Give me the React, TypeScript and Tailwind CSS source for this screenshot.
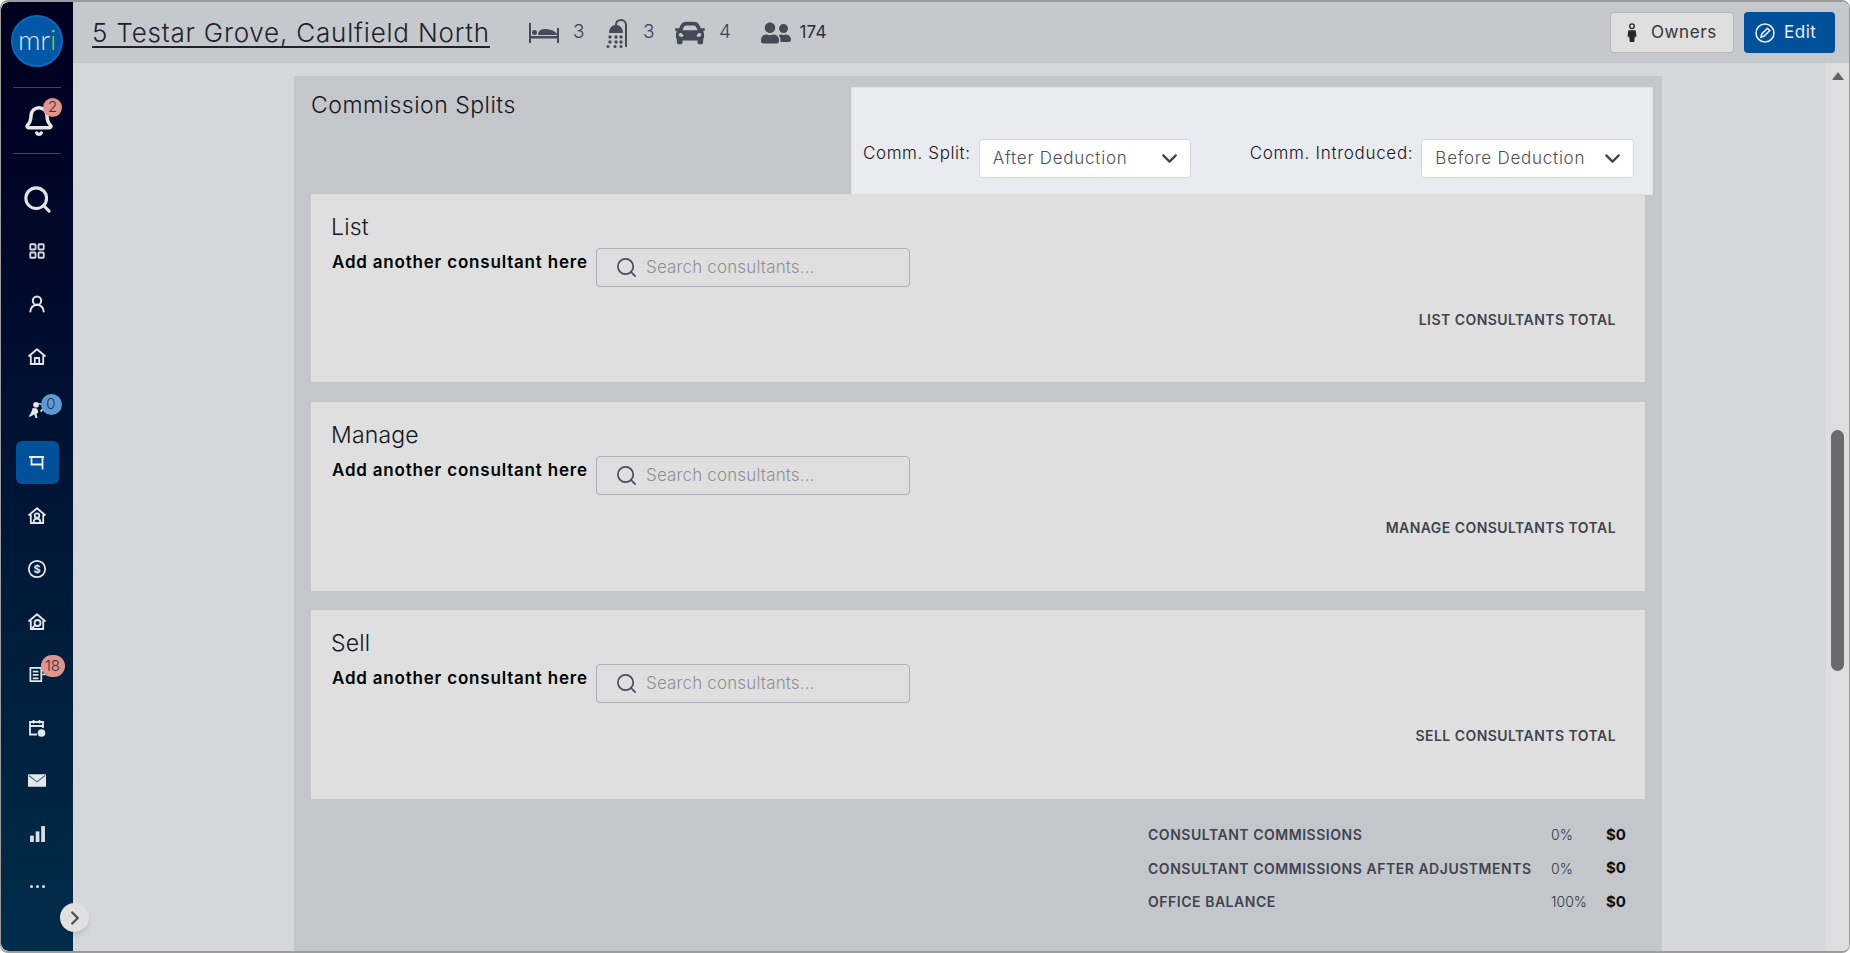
import { Bell, ChevronDown, ChevronRight, LayoutGrid, Search, UserRound } from "lucide-react"
import { FaCar, FaUserFriends } from "react-icons/fa"

const font = "font-['Inter','Liberation_Sans',sans-serif]"

const Badge = ({ text, color, className }: { text: string; color: string; className: string }) => (
    <div className={`absolute flex items-center justify-center rounded-full text-[15px] font-light text-[#33343c] ${color} ${className}`}>
        {text}
    </div>
)

const HomeIcon = ({ variant }: { variant?: "door" | "person" | "search" }) => (
    <svg viewBox="0 0 20 20" className="w-[20px] h-[20px]" fill="none" stroke="#e4e8ec" strokeWidth="1.8" strokeLinejoin="round">
        <path d="M1.500 9.500 10 2.200l8.500 7.300" />
        <path d="M3.800 8.500V17h12.400V8.500" />
        {variant === "door" && <path d="M7.800 17v-6h4.400v6" />}
        {variant === "person" && (
            <>
                <circle cx="10" cy="9.600" r="2.300" />
                <path d="M6.800 17v-1.500c0-1.600 1.400-2.800 3.200-2.800s3.200 1.200 3.200 2.800V17" />
            </>
        )}
        {variant === "search" && (
            <>
                <circle cx="10.500" cy="11" r="3" />
                <path d="m8.300 13.200-4.600 4.300" />
            </>
        )}
    </svg>
)

const SideItem = ({ children, active }: { children: React.ReactNode; active?: boolean }) => (
    <div className={`relative flex items-center justify-center h-[43px] w-[43px] rounded-md ${active ? "bg-[#00509a]" : ""}`}>
        {children}
    </div>
)

const Sidebar = () => (
    <div className="relative flex flex-col items-center w-[72px] shrink-0 h-full rounded-l-lg bg-gradient-to-b from-[#00001f] to-[#012d4a]">
        <div className="mt-[13px] w-[52px] h-[52px] rounded-full bg-[#0357a6] border-2 border-[#0a69b8] flex items-center justify-center">
            <span className="text-[28px] leading-none tracking-[-0.3px] font-light text-[#dfe6ee] font-['Lato',sans-serif] -mt-1">
                mr<span className="text-[#9cc63c]">i</span>
            </span>
        </div>
        <div className="mt-[20px] w-[48px] h-px bg-[#07559b]" />
        <div className="relative flex items-center justify-center w-[48px] h-[65px] pl-[3px]">
            <Bell size={32} color="#e6e6e6" strokeWidth={2.600} />
            <Badge text="2" color="bg-[#e1938d]" className="w-[19px] h-[19px] top-[10px] left-[30px]" />
        </div>
        <div className="w-[48px] h-px bg-[#07559b]" />

        <div className="mt-[25px] h-[41px] flex items-center">
            <Search size={31} color="#e4e4e4" strokeWidth={2.400} />
        </div>
        <div className="flex flex-col items-center mt-[9px] gap-[10px]">
            <SideItem><LayoutGrid size={18} color="#d5d9de" strokeWidth={2.400} /></SideItem>
            <SideItem><UserRound size={20} color="#e4e8ec" strokeWidth={2.400} /></SideItem>
            <SideItem><HomeIcon variant="door" /></SideItem>
            <SideItem>
                <svg viewBox="0 0 20 20" className="w-[19px] h-[19px]" fill="#e6eaee">
                    <circle cx="8.500" cy="5" r="3" />
                    <path d="M5 8.500 9.500 9 11 13l-2 1.500 1 4.500H8l-1.500-4-1.500 1-3.500 2L1 16.500 3 14z" />
                    <path d="M11 3.500a5 5 0 0 1 6 6l-3 3-1.500-1 2.500-2.500a3 3 0 0 0-4-4z" />
                </svg>
                <Badge text="0" color="bg-[#5b9bd5]" className="w-[21px] h-[21px] top-[6px] left-[25px]" />
            </SideItem>
            <SideItem active>
                <svg viewBox="0 0 20 20" className="w-[20px] h-[20px]" fill="none" stroke="#e8eef4" strokeWidth="1.800">
                    <path d="M2 4h15M4.500 4v7.500h11M15.500 4v12.500" />
                </svg>
            </SideItem>
            <SideItem><HomeIcon variant="person" /></SideItem>
            <SideItem>
                <svg viewBox="0 0 20 20" className="w-[20px] h-[20px]" fill="none" stroke="#e4e8ec" strokeWidth="1.800">
                    <circle cx="10" cy="10" r="8.200" />
                    <text x="10" y="14" textAnchor="middle" fontSize="11" fontWeight="700" fill="#e4e8ec" stroke="none" fontFamily="Inter">$</text>
                </svg>
            </SideItem>
            <SideItem><HomeIcon variant="search" /></SideItem>
            <SideItem>
                <svg viewBox="0 0 20 20" className="w-[19px] h-[19px]" fill="none" stroke="#e4e8ec" strokeWidth="1.800">
                    <path d="M2.500 3h11.500v14H2.500z" />
                    <path d="M5 7h6M5 10.500h6M5 14h6M15 6h3M15 10h3" />
                </svg>
                <Badge text="18" color="bg-[#e1938d]" className="w-[24px] h-[22px] top-[2px] left-[25px]" />
            </SideItem>
            <SideItem>
                <svg viewBox="0 0 20 20" className="w-[20px] h-[20px]" fill="none" stroke="#e4e8ec" strokeWidth="1.800">
                    <path d="M10 16.500H3V4h13v6M3 8h13M6.500 2v3.500M12.500 2v3.500" />
                    <circle cx="14.500" cy="15" r="3.800" fill="#e4e8ec" stroke="none" />
                </svg>
            </SideItem>
            <SideItem>
                <svg viewBox="0 0 20 14" className="w-[18px] h-[13px]">
                    <rect width="20" height="14" rx="1" fill="#e4e8ec" />
                    <path d="m1 1.500 9 7 9-7" fill="none" stroke="#3f6a85" strokeWidth="1.200" />
                </svg>
            </SideItem>
            <SideItem>
                <svg viewBox="0 0 16 16" className="w-[17px] h-[17px]" fill="#dbe0e5">
                    <rect x="1" y="10" width="3.500" height="6" />
                    <rect x="6.300" y="6" width="3.500" height="10" />
                    <rect x="11.500" y="1" width="3.500" height="15" />
                </svg>
            </SideItem>
            <SideItem>
                <div className="flex gap-[3px]">
                    <div className="w-[3px] h-[3px] rounded-full bg-[#dbe0e5]" />
                    <div className="w-[3px] h-[3px] rounded-full bg-[#dbe0e5]" />
                    <div className="w-[3px] h-[3px] rounded-full bg-[#dbe0e5]" />
                </div>
            </SideItem>
        </div>
        <div className="absolute top-[901px] left-[59px] z-10 w-[29px] h-[29px] rounded-full bg-[#e0e0e0] shadow-md flex items-center justify-center">
            <ChevronRight size={22} color="#4a4f5c" strokeWidth={2.600} />
        </div>
    </div>
)

const Stat = ({ icon, value, className }: { icon: React.ReactNode; value: string; className?: string }) => (
    <div className={`flex items-center gap-[14px] ${className ?? ""}`}>
        {icon}
        <span className="text-[19px] font-light text-[#3f4450] tracking-[0.5px]">{value}</span>
    </div>
)

const TopBar = () => (
    <div className="flex items-center h-[61px] shrink-0 pl-[19px] pr-[14px] bg-[#c5c8cd]">
        <span className="text-[26px] font-light text-[#20222a] underline decoration-[1.500px] underline-offset-[4px] tracking-[0.8px] whitespace-nowrap">
            5 Testar Grove, Caulfield North
        </span>
        <Stat
            className="ml-[39px]"
            icon={
                <svg viewBox="0 0 30 20" className="w-[30px] h-[20px]" fill="#454a57">
                    <rect x="0" y="0" width="2" height="20" />
                    <rect x="28" y="5" width="2" height="15" />
                    <rect x="0" y="13" width="30" height="2.500" />
                    <path d="M9 12c0-4 3-6 7-6s12 2 12 6z" />
                    <circle cx="5.500" cy="9.500" r="2.500" />
                </svg>
            }
            value="3"
        />
        <Stat
            className="ml-[20px]"
            icon={
                <svg viewBox="0 0 24 30" className="w-[24px] h-[30px]" fill="#454a57">
                    <path d="M21 29V7a5 5 0 0 0-5-5c-3 0-5 2-5 5" fill="none" stroke="#454a57" strokeWidth="2" />
                    <path d="M4 15c0-5 3-8 7-8s7 3 7 8z" />
                    <circle cx="5" cy="19" r="1.700" /><circle cx="11" cy="19" r="1.700" /><circle cx="16" cy="19" r="1.700" />
                    <circle cx="5" cy="24" r="1.700" /><circle cx="11" cy="24" r="1.700" /><circle cx="16" cy="24" r="1.700" />
                    <circle cx="3" cy="28.500" r="1.500" /><circle cx="10" cy="28.500" r="1.500" /><circle cx="16" cy="28.500" r="1.500" />
                </svg>
            }
            value="3"
        />
        <Stat className="ml-[20px]" icon={<FaCar size={30} color="#454a57" />} value="4" />
        <Stat className="ml-[30px]" icon={<FaUserFriends size={30} color="#454a57" />} value="" />
        <span className="ml-[-6px] text-[17px] tracking-[0.3px] text-[#2a2d36] font-normal">174</span>

        <div className="ml-auto flex gap-[10px]">
            <button className="flex items-center h-[41px] w-[124px] rounded-[4px] border border-[#b4b6bc] bg-[#dfdfdf] pl-[15px] text-[17px] tracking-[0.6px] text-[#30333e]">
                <svg viewBox="0 0 12 22" className="w-[12px] h-[20px] mr-[13px]" fill="#24262e">
                    <circle cx="6" cy="3.500" r="2.500" fill="none" stroke="#24262e" strokeWidth="1.500" />
                    <path d="M2 8h8l1 7H9l-.5 6h-5L3 15H1z" />
                </svg>
                Owners
            </button>
            <button className="flex items-center h-[41px] w-[91px] rounded-[4px] bg-[#00509a] pl-[11px] text-[17px] tracking-[0.5px] text-[#e8edf2]">
                <svg viewBox="0 0 20 20" className="w-[20px] h-[20px] mr-[9px]" fill="none" stroke="#e8edf2" strokeWidth="1.600">
                    <circle cx="10" cy="10" r="9" />
                    <path d="m6 14 .8-3 5.700-5.700 2.200 2.200L9 13.200z" />
                </svg>
                Edit
            </button>
        </div>
    </div>
)

const SelectBox = ({ value, width }: { value: string; width: string }) => (
    <div className={`flex items-center justify-between h-[39px] ${width} rounded-[4px] border border-[#d5d7dd] bg-white pl-[13px] pr-[8px] text-[17px] tracking-[0.75px] font-light text-[#4d4f58]`}>
        {value}
        <ChevronDown size={25} color="#3f4450" strokeWidth={2.200} />
    </div>
)

const ConsultantCard = ({ title, total, className }: { title: string; total: string; className: string }) => (
    <div className={`bg-[#dfdfdf] pl-[20px] pr-[29px] pt-[18px] ${className}`}>
        <div className="text-[23px] leading-[30px] font-light tracking-[0.2px] text-[#15161c]">{title}</div>
        <div className="flex mt-[6px]">
            <div className="text-[17px] leading-[24px] pt-[2px] font-semibold tracking-[0.8px] text-black w-[264px] ml-[1px] whitespace-nowrap">Add another consultant here</div>
            <div className="flex items-center h-[39px] w-[314px] rounded-[4px] border border-[#aeb0b6] pl-[18px]">
                <Search size={23} color="#4a4f5c" strokeWidth={1.800} />
                <span className="ml-[8px] text-[17px] font-light tracking-[0.15px] text-[#8e9096]">Search consultants...</span>
            </div>
        </div>
        <div className="mt-[22px] text-right text-[14px] font-semibold text-[#3f4450] tracking-[0.45px]">{total}</div>
    </div>
)

const TotalRow = ({ label, pct }: { label: string; pct: string }) => (
    <div className="flex items-center h-[33.500px]">
        <div className="w-[403px] text-[14px] font-semibold text-[#3f4450] tracking-[0.53px] whitespace-nowrap">{label}</div>
        <div className="w-[55px] text-[14px] font-light text-[#33353e]">{pct}</div>
        <div className="text-[15px] font-bold text-[#0c0d12]">$0</div>
    </div>
)

const Panel = () => (
    <div className="w-[1368px] h-full ml-[221px] mt-[13px] bg-[#c3c6cb]">
        <div className="flex h-[118px]">
            <div className="pl-[17px] pt-[12px] w-[557px] text-[23px] font-light tracking-[0.5px] text-[#15161c]">Commission Splits</div>
            <div className="flex items-end w-[802px] h-[108px] mt-[11px] pb-[16px] bg-[#e9ebf0] border border-[#dfe1e6] pl-[11px]">
                <span className="text-[17px] tracking-[0.6px] font-light text-[#15161c] mb-[12px] mr-[8px] whitespace-nowrap">Comm. Split:</span>
                <SelectBox value="After Deduction" width="w-[212px]" />
                <span className="ml-[59px] text-[17px] tracking-[0.7px] font-light text-[#15161c] mb-[12px] mr-[8px] whitespace-nowrap">Comm. Introduced:</span>
                <SelectBox value="Before Deduction" width="w-[213px]" />
            </div>
        </div>
        <div className="flex flex-col mx-[17px]">
            <ConsultantCard title="List" total="LIST CONSULTANTS TOTAL" className="h-[188px]" />
            <ConsultantCard title="Manage" total="MANAGE CONSULTANTS TOTAL" className="h-[189px] mt-[20px]" />
            <ConsultantCard title="Sell" total="SELL CONSULTANTS TOTAL" className="h-[189px] mt-[19px]" />
        </div>
        <div className="ml-[854px] mt-[19px]">
            <TotalRow label="CONSULTANT COMMISSIONS" pct="0%" />
            <TotalRow label="CONSULTANT COMMISSIONS AFTER ADJUSTMENTS" pct="0%" />
            <TotalRow label="OFFICE BALANCE" pct="100%" />
        </div>
    </div>
)

const Scrollbar = () => (
    <div className="w-[23px] shrink-0 flex flex-col items-center bg-[#dedede]">
        <div className="mt-[9px] w-0 h-0 border-l-[6px] border-r-[6px] border-b-[8px] border-l-transparent border-r-transparent border-b-[#5f6268]" />
        <div className="mt-[350px] w-[13px] h-[241px] rounded-full bg-[#6b6b6b]" />
    </div>
)

export default function App() {
    return (
        <div className={`${font} h-[953px] w-[1850px] overflow-hidden bg-white border-t-2 border-b-2 border-l border-r border-[#9c9c9c] rounded-lg flex`}>
            <Sidebar />
            <div className="flex flex-col flex-1 min-w-0 bg-[#d5d7db]">
                <TopBar />
                <div className="flex flex-1 min-h-0 overflow-hidden">
                    <div className="flex-1 min-w-0 overflow-hidden">
                        <Panel />
                    </div>
                    <Scrollbar />
                </div>
            </div>
        </div>
    )
}
